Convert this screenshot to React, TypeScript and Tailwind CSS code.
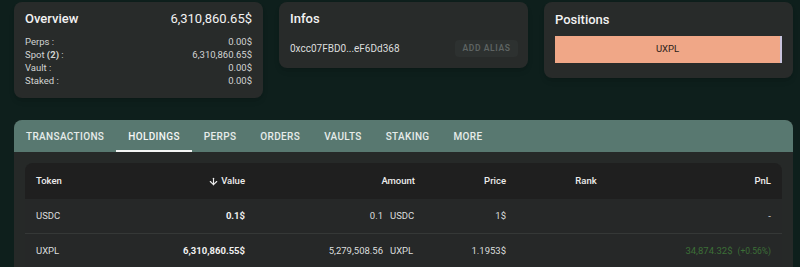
import React from "react";
import { ArrowDown } from "lucide-react";

const font = { fontFamily: "Roboto, 'Liberation Sans', sans-serif" };

function Row({ label, value }: { label: React.ReactNode; value: string }) {
  return (
    <div className="flex justify-between h-[13px] items-center text-[9.5px] text-[#d2d4d3]">
      <span>{label}</span>
      <span>{value}</span>
    </div>
  );
}

const tabs = ["TRANSACTIONS", "HOLDINGS", "PERPS", "ORDERS", "VAULTS", "STAKING", "MORE"];

const cols = "grid grid-cols-[115px_116px_170px_91px_138px_127px]";

export default function App() {
  return (
    <div style={font} className="min-h-[267px] w-[800px] bg-[#0e1f1c] pl-[14px] pr-[7px] pt-[2px] overflow-hidden">
      <div className="flex gap-4 items-start">
        {/* Overview */}
        <div className="flex-1 rounded-lg bg-[#282b2a] px-[11px] pt-[6px] pb-[10px] shadow-md">
          <div className="flex justify-between items-center h-[22px] text-[13px] font-medium text-[#f2f2f2]">
            <span>Overview</span>
            <span className="font-normal">6,310,860.65$</span>
          </div>
          <div className="mt-[6px]">
            <Row label="Perps :" value="0.00$" />
            <Row label={<>Spot <b className="font-bold">(2)</b> :</>} value="6,310,860.65$" />
            <Row label="Vault :" value="0.00$" />
            <Row label="Staked :" value="0.00$" />
          </div>
        </div>
        {/* Infos */}
        <div className="flex-1 rounded-lg bg-[#282b2a] px-[11px] pt-[6px] pb-[11px] shadow-md">
          <div className="h-[22px] flex items-center text-[13px] font-medium text-[#f2f2f2]">Infos</div>
          <div className="mt-[10px] flex items-center justify-between">
            <span className="text-[10px] text-[#dcdedd]">0xcc07FBD0...eF6Dd368</span>
            <span className="mr-[-1px] h-[17px] w-[63px] flex items-center justify-center rounded bg-[#2d3130] text-[8.5px] font-semibold tracking-[0.6px] text-[#5e6463]">
              ADD ALIAS
            </span>
          </div>
        </div>
        {/* Positions */}
        <div className="flex-1 rounded-lg bg-[#282b2a] px-[11px] pt-[7px] pb-[15px] shadow-md">
          <div className="h-[22px] flex items-center text-[13px] font-medium text-[#f2f2f2]">Positions</div>
          <div className="mt-[5px] h-[27px] flex items-center justify-center bg-[#f0a787] border-r-2 border-[#c9c3dc] text-[9.5px] text-[#2a1d18]">
            UXPL
          </div>
        </div>
      </div>

      {/* Tabs section */}
      <div className="mt-[22px] rounded-t-lg bg-[#262928] overflow-hidden">
        <div className="flex h-[32px] bg-[#587870]">
          {tabs.map((t) => (
            <div
              key={t}
              className={
                "relative px-3 flex items-center text-[10px] font-medium tracking-[0.35px] " +
                (t === "HOLDINGS" ? "text-[#f4f6f5]" : "text-[#e6ecea]")
              }
            >
              {t}
              {t === "HOLDINGS" && <span className="absolute left-0 right-0 bottom-0 h-[2px] bg-[#f4f6f5]" />}
            </div>
          ))}
        </div>
        <div className="px-[11px] pt-[11px] pb-[20px]">
          <div className="rounded-t-lg overflow-hidden bg-[#262828]">
            <div className={cols + " h-[36px] items-center bg-[#1f1f1f] text-[9.5px] font-medium text-[#ececec]"}>
              <div className="px-[11px]">Token</div>
              <div className="px-[11px] flex justify-end items-center gap-[2px]">
                <ArrowDown size={11} strokeWidth={2.5} />
                <span>Value</span>
              </div>
              <div className="px-[11px] text-right">Amount</div>
              <div className="px-[11px] text-right">Price</div>
              <div className="px-[11px] text-center">Rank</div>
              <div className="px-[11px] text-right">PnL</div>
            </div>
            <div className={cols + " h-[35px] items-center border-b border-[#353837] text-[9.5px] text-[#dcdedd]"}>
              <div className="px-[11px]">USDC</div>
              <div className="px-[11px] text-right font-bold text-[#f0f0f0]">0.1$</div>
              <div className="px-[11px] flex justify-end">
                <span>0.1</span>
                <span className="ml-[7px] w-[25px]">USDC</span>
              </div>
              <div className="px-[11px] text-right">1$</div>
              <div className="px-[11px]"></div>
              <div className="px-[11px] text-right">-</div>
            </div>
            <div className={cols + " h-[35px] items-center border-b border-[#353837] text-[9.5px] text-[#dcdedd]"}>
              <div className="px-[11px]">UXPL</div>
              <div className="px-[11px] text-right font-bold text-[#f0f0f0]">6,310,860.55$</div>
              <div className="px-[11px] flex justify-end">
                <span>5,279,508.56</span>
                <span className="ml-[7px] w-[25px]">UXPL</span>
              </div>
              <div className="px-[11px] text-right">1.1953$</div>
              <div className="px-[11px]"></div>
              <div className="px-[11px] text-right text-[#3c6f37]">
                34,874.32$<span className="ml-[5px] text-[8.5px]">(+0.56%)</span>
              </div>
            </div>
          </div>
        </div>
      </div>
    </div>
  );
}
